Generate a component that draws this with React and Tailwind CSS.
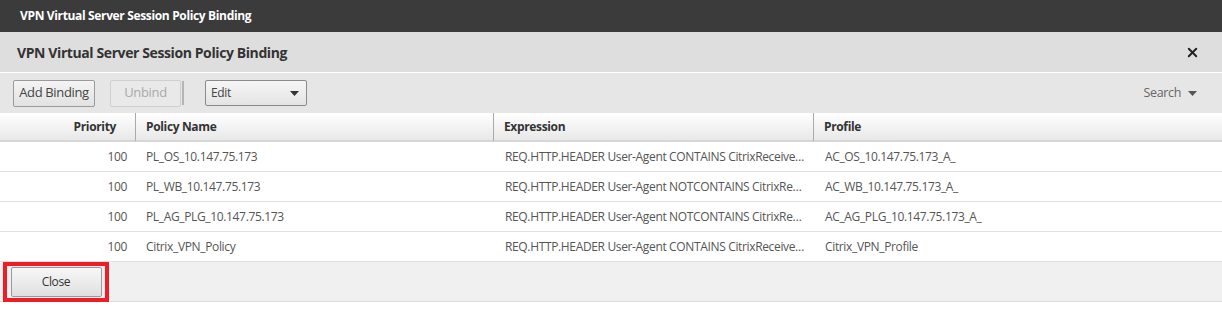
import React from 'react';
import { X } from 'lucide-react';

const rows = [
    { priority: 100, name: 'PL_OS_10.147.75.173', expr: 'REQ.HTTP.HEADER User-Agent CONTAINS CitrixReceiver && REQ.HTTP.HEADER Referer NOTEXISTS', profile: 'AC_OS_10.147.75.173_A_' },
    { priority: 100, name: 'PL_WB_10.147.75.173', expr: 'REQ.HTTP.HEADER User-Agent NOTCONTAINS CitrixReceiver', profile: 'AC_WB_10.147.75.173_A_' },
    { priority: 100, name: 'PL_AG_PLG_10.147.75.173', expr: 'REQ.HTTP.HEADER User-Agent NOTCONTAINS CitrixReceiver', profile: 'AC_AG_PLG_10.147.75.173_A_' },
    { priority: 100, name: 'Citrix_VPN_Policy', expr: 'REQ.HTTP.HEADER User-Agent CONTAINS CitrixReceiver && REQ.HTTP.HEADER Referer NOTEXISTS', profile: 'Citrix_VPN_Profile' },
];

const Caret = ({ className }) => (
    <svg width="9" height="5" viewBox="0 0 9 5" className={className}>
        <path d="M0 0 L9 0 L4.5 5 Z" fill="currentColor" />
    </svg>
);

export default function App() {
    return (
        <div className="w-[1222px] h-[321px] bg-white text-[12px] tracking-[-0.35px] font-['Open_Sans',sans-serif] overflow-hidden">
            {/* window bar */}
            <div className="h-[32px] bg-[#3b3b3b] flex items-center pl-[20px] text-white font-bold text-[12px]">
                VPN Virtual Server Session Policy Binding
            </div>

            {/* dialog title */}
            <div className="h-[41px] bg-[#dedede] flex items-center justify-between pl-[17px] pr-[22px] border-b border-white">
                <h2 className="text-[14px] font-bold text-[#333] tracking-[-0.4px]">VPN Virtual Server Session Policy Binding</h2>
                <X className="w-[15px] h-[15px] text-[#222]" strokeWidth={3} />
            </div>

            {/* toolbar */}
            <div className="h-[40px] bg-[#e6e6e6] flex items-center pl-[13px] pr-[25px]">
                <button className="h-[27px] w-[82px] border border-[#9a9a9a] rounded-[2px] bg-gradient-to-b from-[#f4f4f4] to-[#e2e2e2] text-[#444] text-[13px]">Add Binding</button>
                <button className="ml-[15px] h-[27px] w-[71px] border border-[#cfcfcf] rounded-[2px] bg-[#e9e9e9] text-[#aaa] text-[13px]">Unbind</button>
                <div className="ml-[1px] h-[24px] w-[2px] bg-[#b5b5b5]" />
                <div className="ml-[21px] h-[26px] w-[102px] border border-[#8a8a8a] rounded-[2px] bg-gradient-to-b from-[#f6f6f6] to-[#e4e4e4] flex items-center justify-between pl-[5px] pr-[7px] text-[#444]">
                    <span>Edit</span>
                    <Caret className="text-[#333]" />
                </div>
                <div className="ml-auto flex items-center gap-[7px] text-[#666] text-[12.5px]">
                    <span>Search</span>
                    <Caret className="text-[#555]" />
                </div>
            </div>

            {/* table */}
            <div className="grid grid-cols-[136px_358px_320px_1fr]">
                <div className="h-[29px] flex items-center justify-end pr-[19px] font-bold text-[#333] bg-gradient-to-b from-white to-[#e8e8e8] border-b-2 border-[#d6d6d6] border-r border-r-[#aaa]">Priority</div>
                <div className="h-[29px] flex items-center pl-[10px] font-bold text-[#333] bg-gradient-to-b from-white to-[#e8e8e8] border-b-2 border-[#d6d6d6] border-r border-r-[#aaa]">Policy Name</div>
                <div className="h-[29px] flex items-center pl-[10px] font-bold text-[#333] bg-gradient-to-b from-white to-[#e8e8e8] border-b-2 border-[#d6d6d6] border-r border-r-[#aaa]">Expression</div>
                <div className="h-[29px] flex items-center pl-[10px] font-bold text-[#333] bg-gradient-to-b from-white to-[#e8e8e8] border-b-2 border-[#d6d6d6]">Profile</div>

                {rows.map((r, i) => (
                    <React.Fragment key={i}>
                        <div className="h-[30px] flex items-center justify-end pr-[9px] text-[#555] border-b border-[#e1e1e1]">{r.priority}</div>
                        <div className="h-[30px] flex items-center pl-[10px] text-[#555] border-b border-[#e1e1e1]">{r.name}</div>
                        <div className="h-[30px] flex items-center pl-[11px] pr-[7px] text-[#555] border-b border-[#e1e1e1] min-w-0">
                            <span className="truncate">{r.expr}</span>
                        </div>
                        <div className="h-[30px] flex items-center pl-[11px] text-[#555] border-b border-[#e1e1e1]">{r.profile}</div>
                    </React.Fragment>
                ))}
            </div>

            {/* footer */}
            <div className="h-[40px] bg-[#f0f0f0] border-b border-[#dcdcdc] flex items-center pl-[3px]">
                <div className="w-[106px] h-[40px] border-[4px] border-[#ee1c25] flex items-center justify-center">
                    <button className="w-[91px] h-[30px] border border-[#9a9a9a] rounded-[2px] bg-gradient-to-b from-[#f7f7f7] to-[#e0e0e0] text-[#333]">Close</button>
                </div>
            </div>
        </div>
    );
}
